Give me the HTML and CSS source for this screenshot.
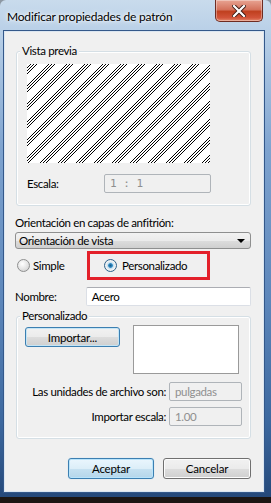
FILE: index.html
```html
<!DOCTYPE html>
<html lang="es">
<head>
    <meta charset="utf-8">
    <meta name="viewport" content="width=device-width, initial-scale=1.0">
    <title>Modificar propiedades de patrón</title>
    <link rel="stylesheet" href="styles.css">
</head>
<body>
    <div class="screen">
        <div class="window">
            <div class="titlebar">
                <span class="title">Modificar propiedades de patrón</span>
                <span class="close">
                    <svg width="14" height="12" viewBox="0 0 14 12">
                        <path d="M2 1 L12 11 M12 1 L2 11" stroke="#3a1a14" stroke-width="4" stroke-linecap="square"/>
                        <path d="M2 1 L12 11 M12 1 L2 11" stroke="#ffffff" stroke-width="2.2" stroke-linecap="square"/>
                    </svg>
                </span>
            </div>

            <div class="client">
                <div class="group preview-group">
                    <span class="group-title">Vista previa</span>
                    <div class="preview">
                        <svg width="183" height="99" shape-rendering="crispEdges">
                            <defs>
                                <pattern id="hatch" width="18" height="18" patternUnits="userSpaceOnUse">
                                    <path d="M0 4 L4 0 M0 7 L7 0 M0 10 L10 0 M4 18 L18 4 M7 18 L18 7 M10 18 L18 10" stroke="#000" stroke-width="1"/>
                                </pattern>
                            </defs>
                            <rect width="183" height="99" fill="#fff"/>
                            <rect width="183" height="99" fill="url(#hatch)"/>
                        </svg>
                    </div>
                    <div class="scale-row">
                        <span class="scale-label">Escala:</span>
                        <span class="field disabled mono">1 : 1</span>
                    </div>
                </div>

                <div class="caption">Orientación en capas de anfitrión:</div>
                <div class="select">
                    <span>Orientación de vista</span>
                    <span class="arrow"></span>
                </div>

                <div class="radios">
                    <label class="radio simple"><span class="dot"></span>Simple</label>
                    <div class="highlight">
                        <label class="radio checked"><span class="dot"></span>Personalizado</label>
                    </div>
                </div>

                <div class="name-row">
                    <span class="name-label">Nombre:</span>
                    <span class="field name-field">Acero</span>
                </div>

                <div class="group custom-group">
                    <span class="group-title">Personalizado</span>
                    <div class="import-row">
                        <button class="btn import-btn">Importar...</button>
                        <div class="import-box"></div>
                    </div>
                    <div class="units">
                        <span class="units-label">Las unidades de archivo son:</span>
                        <span class="field disabled">pulgadas</span>
                        <span class="units-label">Importar escala:</span>
                        <span class="field disabled">1.00</span>
                    </div>
                </div>

                <div class="actions">
                    <button class="btn default">Aceptar</button>
                    <button class="btn cancel">Cancelar</button>
                </div>
            </div>
        </div>
        <div class="taskbar"></div>
    </div>
</body>
</html>
```

FILE: styles.css
```css
body {
    margin: 0;
    font-family: 'Lato', 'Open Sans', sans-serif;
    font-size: 11.5px;
    letter-spacing: -0.35px;
    color: #000000;
}

.screen {
    width: 271px;
    height: 503px;
    background: #8d98a3;
    overflow: hidden;
}

.window {
    box-sizing: border-box;
    height: 497px;
    padding: 0 8px 6px 5px;
    border-radius: 6px 6px 0 0;
    background: linear-gradient(180deg, #c9dbec 0%, #b5cde6 8%, #7ea3cf 30%, #5d87bb 60%, #3c689f 85%, #25497a 100%);
}

.titlebar {
    display: flex;
    height: 32px;
}

.title {
    margin: 10px 0 0 2px;
    line-height: 14px;
    font-size: 12px;
    letter-spacing: -0.2px;
    white-space: nowrap;
    color: #000000;
    text-shadow: 0 0 6px #ffffff, 0 0 3px #ffffff;
}

.close {
    margin-left: auto;
    width: 48px;
    height: 22px;
    box-sizing: border-box;
    display: flex;
    align-items: center;
    justify-content: center;
    border: 1px solid #6e2c22;
    border-top: none;
    border-radius: 0 0 5px 5px;
    background: linear-gradient(180deg, #e8a493 0%, #d4735d 45%, #c0401f 55%, #d2543a 85%, #e48a6e 100%);
    box-shadow: inset 0 0 0 1px rgba(255, 255, 255, 0.35);
}

.client {
    box-sizing: border-box;
    height: 459px;
    padding: 0 12px 0 11px;
    display: flex;
    flex-direction: column;
    white-space: nowrap;
    background: #f0f0f0;
    box-shadow: 0 0 0 1px #dbe6f1, 0 0 0 2px #34588a;
}

.group {
    position: relative;
    box-sizing: border-box;
    border: 1px solid #d5dfe5;
    border-radius: 3px;
    box-shadow: inset 0 0 0 1px #ffffff;
}

.group-title {
    position: absolute;
    top: -8px;
    left: 3px;
    padding: 0 2px;
    line-height: 14px;
    background: #f0f0f0;
}

.preview-group {
    margin-top: 19px;
    height: 155px;
    padding: 12px 0 0 10px;
}

.preview {
    width: 183px;
    height: 99px;
}

.preview svg {
    display: block;
}

.scale-row {
    display: flex;
    align-items: center;
    margin-top: 11px;
    height: 19px;
}

.scale-label {
    width: 77px;
}

.field {
    box-sizing: border-box;
    height: 19px;
    padding: 0 5px;
    display: flex;
    align-items: center;
    background: #ffffff;
    border: 1px solid #dbdfe6;
    border-top-color: #abadb3;
    border-radius: 2px;
}

.field.disabled {
    width: 73px;
    background: #f0f0f0;
    border-color: #afb4b9;
    color: #8f8f8f;
}

.scale-row .field.disabled {
    width: 107px;
}

.mono {
    font-family: 'DejaVu Sans Mono', monospace;
    font-size: 11px;
    letter-spacing: 0;
}

.caption {
    margin: 10px 0 0 -1px;
    line-height: 14px;
}

.select {
    box-sizing: border-box;
    margin: 2px 0 0 -1px;
    width: 236px;
    height: 17px;
    padding: 0 5px 0 3px;
    display: flex;
    align-items: center;
    justify-content: space-between;
    border: 1px solid #8e8f8f;
    border-radius: 3px;
    background: linear-gradient(180deg, #f2f2f2 0%, #ebebeb 50%, #dddddd 51%, #cfcfcf 100%);
}

.arrow {
    width: 0;
    height: 0;
    border-left: 4px solid transparent;
    border-right: 4px solid transparent;
    border-top: 4px solid #000000;
}

.radios {
    display: flex;
    align-items: center;
    margin-top: 2px;
    height: 29px;
}

.radio {
    display: flex;
    align-items: center;
    gap: 3px;
}

.radio.simple {
    margin-left: 1px;
    width: 70px;
}

.dot {
    box-sizing: border-box;
    width: 13px;
    height: 13px;
    border-radius: 50%;
    border: 1px solid #8e8f8f;
    background: radial-gradient(circle at 40% 35%, #ffffff 0%, #e6e6e6 50%, #c8c8c8 100%);
}

.radio.checked .dot {
    background: radial-gradient(circle, #1b5a8a 0%, #2f8cc4 25%, #bfdcef 35%, #f4f4f4 60%, #d6d6d6 100%);
    border-color: #2c628b;
}

.highlight {
    box-sizing: border-box;
    width: 123px;
    height: 29px;
    padding-left: 14px;
    display: flex;
    align-items: center;
    border: 3px solid #e3202a;
}

.highlight .radio {
    gap: 5px;
}

.name-row {
    display: flex;
    align-items: center;
    margin: 7px 0 0 -1px;
    height: 19px;
}

.name-label {
    width: 71px;
}

.name-field {
    width: 166px;
}

.custom-group {
    margin-top: 10px;
    height: 123px;
    padding: 8px 0 0 5px;
}

.import-row {
    display: flex;
    align-items: flex-start;
}

.btn {
    box-sizing: border-box;
    height: 21px;
    padding: 0;
    font-family: inherit;
    font-size: 11.5px;
    letter-spacing: -0.2px;
    color: #000000;
    border: 1px solid #707070;
    border-radius: 3px;
    background: linear-gradient(180deg, #f2f2f2 0%, #ebebeb 50%, #dddddd 51%, #cfcfcf 100%);
    box-shadow: inset 0 0 0 1px #fcfcfc;
}

.import-btn {
    margin: 2px 0 0 3px;
    width: 95px;
    height: 20px;
    border-color: #3c7fb1;
    box-shadow: inset 0 0 0 1px #c4e5f6;
}

.import-box {
    box-sizing: border-box;
    margin-left: 13px;
    width: 106px;
    height: 49px;
    background: #ffffff;
    border: 1px solid #9a9a9a;
}

.units {
    display: grid;
    grid-template-columns: 144px 73px;
    column-gap: 3px;
    row-gap: 6px;
    align-items: center;
    margin-top: 8px;
}

.units-label {
    text-align: right;
}

.actions {
    display: flex;
    justify-content: flex-end;
    gap: 9px;
    margin-top: 19px;
}

.btn.default {
    width: 86px;
    border-color: #3c7fb1;
    background: linear-gradient(180deg, #eaf6fd 0%, #dceef8 50%, #c6e1f1 51%, #b5d6ea 100%);
    box-shadow: inset 0 0 0 1px #b9e4fb, 0 0 1px #9fd4f3;
}

.btn.cancel {
    width: 88px;
}

.taskbar {
    height: 6px;
    background: #1c1613;
}
```
